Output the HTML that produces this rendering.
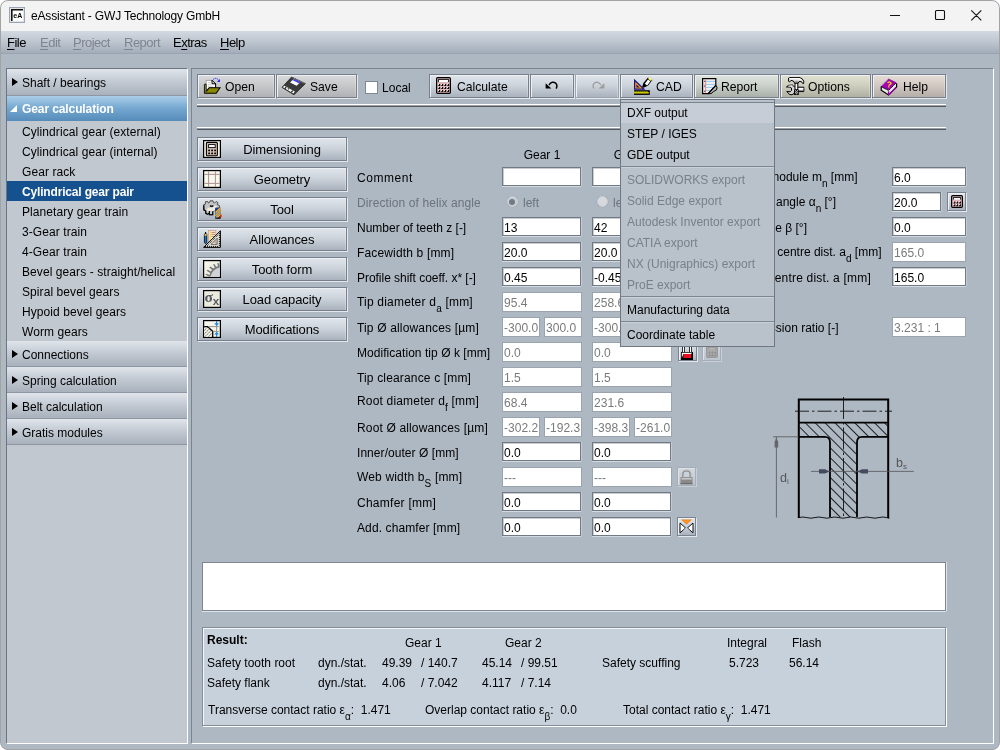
<!DOCTYPE html>
<html><head><meta charset="utf-8"><title>eAssistant - GWJ Technology GmbH</title>
<style>
*{box-sizing:border-box;margin:0;padding:0}
html,body{width:1000px;height:750px;overflow:hidden;background:#fff}
body{font-family:"Liberation Sans","DejaVu Sans",sans-serif;font-size:12px;color:#000;position:relative}
#win div,#win span,#win i,#win svg{position:absolute}
#win{position:absolute;left:0;top:0;width:1000px;height:750px;background:#aeb8c3;border-radius:8px;overflow:hidden;will-change:transform}
#frame{left:0;top:0;width:1000px;height:750px;border:1px solid #a3a3a3;border-radius:8px;z-index:50;pointer-events:none}
#title{left:0;top:0;width:1000px;height:31px;background:#f3f3f3}
#title .t{left:31px;top:9px;font-size:12px;white-space:nowrap;letter-spacing:-.17px}
#menubar{left:0;top:31px;width:1000px;height:23px;background:linear-gradient(#d3d9e1,#bfc7d1 45%,#a3adb9);border-bottom:1px solid #9aa4b0}
#menubar span{top:4px;font-size:13px;white-space:nowrap;letter-spacing:-.5px}
#menubar .d{color:#7d858f}
u{text-decoration:underline;text-underline-offset:2px;text-decoration-thickness:1px}
#side{left:6px;top:68px;width:182px;height:676px;background:#c1c8d0;border:1px solid;border-color:#6d7680 #fff #fff #6d7680}
.hdr{left:0;width:180px;height:26px;background:linear-gradient(#e0e5eb,#c4cbd4 45%,#a8b1bc);border-bottom:1px solid #8d97a3;line-height:29px;white-space:nowrap}
.hdr.sel{background:linear-gradient(#abcde8,#74a7d0 50%,#568cba);color:#fff;font-weight:bold;border-bottom:0;height:25px;line-height:26px;letter-spacing:-.1px}
.hdr i{left:5px;top:9px;width:0;height:0;border:4.5px solid transparent;border-left:6px solid #000;border-right:0}
.hdr i.open{left:3px;top:9px;border:0;border-bottom:7px solid #fff;border-left:7px solid transparent}
.hdr span{left:15px;top:0;font-weight:inherit}
.it{left:0;width:180px;height:20px;line-height:22px;white-space:nowrap;padding-left:15px;letter-spacing:.08px}
.it.sel{background:#15518f;color:#fff;font-weight:bold;letter-spacing:-.17px}
#main{left:191px;top:68px;width:803px;height:676px;border:1px solid;border-color:#7b8590 #fff #fff #7b8590}
.btn{border:1px solid #767f8a;background:linear-gradient(#e0e5eb,#cdd4dc 45%,#a9b2bd);box-shadow:inset 1px 1px 0 #edf0f4,inset -1px 0 0 rgba(255,255,255,.25),1px 1px 0 #e4e8ed;white-space:nowrap;font-size:13px}
.btn.n{background:linear-gradient(#d9dadc,#c8c9cb 45%,#b0b1b4)}
.btn.g{background:linear-gradient(#dfe4df,#ccd2cc 45%,#a9b0a8)}
.btn.y{background:linear-gradient(#e2e2d4,#d0d0c0 45%,#b0b0a2)}
.btn.p{background:linear-gradient(#e5ded7,#d2cac3 45%,#b4ada7)}
.btn.dis{border-color:#9ba5b0;color:#858d97}
.btn span{white-space:nowrap}
.tb span{transform:scaleX(.935);transform-origin:0 50%}
.sep{left:197px;width:749px;height:3px;background:linear-gradient(#fff 0,#fff 33%,#9a9fa6 34%,#9a9fa6 66%,#55595f 67%)}
.lbl{white-space:nowrap;font-size:12px;line-height:14px}
.lbl.d{color:#6b737c}
.lbl sub{font-size:10px;position:relative;top:6px;vertical-align:baseline;line-height:0}
.inp{height:19px;background:#fff;border:1px solid #707984;box-shadow:inset 1px 1px 0 rgba(100,110,122,.35),0 1px 0 #d4dae1,1px 0 0 #c3cad3;font-size:13px;line-height:18px;white-space:nowrap;overflow:hidden}
.inp span{left:1px;top:1px;transform:scaleX(.925);transform-origin:0 50%}
.inp.d{height:20px;box-shadow:none;border-color:#9aa4af;color:#7a7a7a}
.inp.d span{top:1px}
.sb{width:19px;height:19px;border:1px solid #7a838e;background:linear-gradient(#e3e8ee,#cdd4dc 45%,#a9b2bd);box-shadow:inset 1px 1px 0 #eef1f5,1px 1px 0 #e4e8ed}
.sb.dis{border-color:#a4adb8;background:linear-gradient(#d3d9e1,#bcc4ce);box-shadow:inset 1px 1px 0 #dde2e8,1px 1px 0 #c8cfd7}
#pop{left:620px;top:99px;width:155px;height:248px;background:#b9c1cb;border:1px solid #6f7882;z-index:20;font-size:12px}
#pop .tl{left:0;top:2px;width:153px;height:1px;background:#7a838d}
#pop .mi{left:0;width:153px;height:21px;line-height:23px;padding-left:6px;white-space:nowrap}
#pop .mi.d{color:#78808a}
#pop .mi.h{background:#c6cdd6}
#pop .ms{left:0;width:153px;height:2px;border-top:1px solid #7c8590;border-bottom:1px solid #c9d0d8}
#res{left:202px;top:627px;width:744px;height:99px;background:#c7d1dc;border:1px solid #858f9a;box-shadow:1px 1px 0 #fff,inset 1px 1px 0 #f4f6f8}
#res span{white-space:nowrap;font-size:12px;line-height:14px}
#ta{left:202px;top:562px;width:744px;height:49px;background:#fff;border:1px solid #7d8792;box-shadow:0 1px 0 #dfe4ea,1px 0 0 #dfe4ea}
</style></head><body>
<div id="win">
<div id="title"><svg style="left:9px;top:7px" width="16" height="16" viewBox="0 0 16 16" ><rect x=".5" y=".5" width="15" height="15" fill="#dfe3e8" stroke="#9aa5b1"/><rect x="2" y="2" width="12" height="12" fill="#fff"/><path d="M2.8 14V2.8H14" fill="none" stroke="#111" stroke-width="1.6"/><text x="8.8" y="11" font-size="7" font-weight="bold" font-family="Liberation Sans,sans-serif" text-anchor="middle">eA</text></svg><span class="t">eAssistant - GWJ Technology GmbH</span><svg style="left:885px;top:0px" width="110" height="31" viewBox="0 0 110 31" ><path d="M5 15.5h10M51.5 10.5h7a1 1 0 0 1 1 1v7a1 1 0 0 1 -1 1h-7a1 1 0 0 1 -1 -1v-7a1 1 0 0 1 1 -1zM86.3 10.3l10 10M96.3 10.3l-10 10" fill="none" stroke="#111" stroke-width="1.1"/></svg></div>
<div id="menubar"><span style="left:7px"><u>F</u>ile</span><span class="d" style="left:40px"><u>E</u>dit</span><span class="d" style="left:73px"><u>P</u>roject</span><span class="d" style="left:124px"><u>R</u>eport</span><span style="left:173px">E<u>x</u>tras</span><span style="left:220px"><u>H</u>elp</span></div>
<div id="side">
<div class="hdr" style="top:0px;height:27px"><i></i><span>Shaft / bearings</span></div>
<div class="hdr sel" style="top:27px"><i class=open></i><span>Gear calculation</span></div>
<div class="it" style="top:52px">Cylindrical gear (external)</div>
<div class="it" style="top:72px">Cylindrical gear (internal)</div>
<div class="it" style="top:92px">Gear rack</div>
<div class="it sel" style="top:112px">Cylindrical gear pair</div>
<div class="it" style="top:132px">Planetary gear train</div>
<div class="it" style="top:152px">3-Gear train</div>
<div class="it" style="top:172px">4-Gear train</div>
<div class="it" style="top:192px">Bevel gears - straight/helical</div>
<div class="it" style="top:212px">Spiral bevel gears</div>
<div class="it" style="top:232px">Hypoid bevel gears</div>
<div class="it" style="top:252px">Worm gears</div>
<div class="hdr" style="top:272px"><i></i><span>Connections</span></div>
<div class="hdr" style="top:298px"><i></i><span>Spring calculation</span></div>
<div class="hdr" style="top:324px"><i></i><span>Belt calculation</span></div>
<div class="hdr" style="top:350px"><i></i><span>Gratis modules</span></div>
</div>
<div id="main"></div>
<div class="btn tb n" style="left:197px;top:74px;width:78px;height:24px"><svg style="left:5px;top:2px" width="18" height="18" viewBox="0 0 18 18" ><g transform="translate(1,1)"><path d="M2.2 2.4H8.2L11.6 5.8V9.6H5L2.4 13Z" fill="#fff" stroke="#777" stroke-width=".6"/><path d="M8 2.2V5.8H11.6M11.6 5.8V9.6" fill="none" stroke="#000" stroke-width="1"/><path d="M8 2.2L11.8 6" stroke="#000" stroke-width="1"/><path d="M4 4.6h3.4M4 6.4h3.6M4 8.2h5" stroke="#bbb" stroke-width=".7"/><path d="M.4 6.4L2 6V13.6L.4 15Z" fill="#d6cf58" stroke="#000" stroke-width=".9"/><path d="M5.2 9.8H15.8L12 15.2H.6L2.2 13.6Z" fill="#8a8a00"/><path d="M.3 15.3H12.2L16 9.7H5.2L2.3 13.4" fill="none" stroke="#000" stroke-width="1.1"/><path d="M9 1.6Q11.6 -.9 14.2 1.6" fill="none" stroke="#2a2aff" stroke-width="1" stroke-dasharray="1.4 .8"/><path d="M13 3.8L15.9 1V3.9Z" fill="#1a1aff"/></g></svg><span style="left:27px;top:4px">Open</span></div>
<div class="btn tb n" style="left:276px;top:74px;width:81px;height:24px"><svg style="left:4px;top:1px" width="26" height="20" viewBox="0 0 26 20" ><path d="M10.6 1L24.4 7.6L13 18.8L1 11.4Z" fill="#3a3a3a" stroke="#222" stroke-width=".8"/><path d="M11.4 1.6L23.6 7.4" stroke="#8a8a8a" stroke-width=".8"/><path d="M9 6.6L12.6 3.2L19 6.4L15.6 9.8Z" fill="#fff"/><path d="M12.6 3L19.2 6.2L18.2 7.4L11.8 4.2Z" fill="#3d3dff"/><path d="M1.8 11.3L3.6 9.8L13.8 15.6L12.4 17.6Z" fill="#f4f4f4"/><path d="M3.8 12.8l1.4-2M10.4 16.4l1.3-1.9" stroke="#222" stroke-width="1.2"/><path d="M6.8 12.4l1.4 .8" stroke="#333" stroke-width="1.1"/></svg><span style="left:33px;top:4px">Save</span></div>
<div style="left:365px;top:81px;width:13px;height:13px;background:#fff;border:1px solid #7f8893"></div><span class="lbl" style="left:382px;top:81px;font-size:13px;transform:scaleX(.925);transform-origin:0 50%">Local</span>
<div class="btn tb " style="left:429px;top:74px;width:100px;height:24px"><svg style="left:6px;top:2px" width="15" height="17" viewBox="0 0 15 17" ><rect x=".6" y=".6" width="13.8" height="15.8" rx="1.2" fill="#dbb2b6" stroke="#000" stroke-width="1.2"/><rect x="2.4" y="2.4" width="10.2" height="2.6" fill="#fff"/><path d="M2.4 5.0V2.4H12.6V5.0" fill="none" stroke="#000" stroke-width=".9"/><rect x="2.80" y="7.10" width="1.4" height="1.8" rx=".5" fill="#000"/><rect x="2.30" y="8.10" width="1.4" height=".9" rx=".3" fill="#000"/><rect x="2.00" y="6.80" width="1" height="1" fill="#fff" opacity=".9"/><rect x="5.80" y="7.10" width="1.4" height="1.8" rx=".5" fill="#000"/><rect x="5.30" y="8.10" width="1.4" height=".9" rx=".3" fill="#000"/><rect x="5.00" y="6.80" width="1" height="1" fill="#fff" opacity=".9"/><rect x="8.80" y="7.10" width="1.4" height="1.8" rx=".5" fill="#000"/><rect x="8.30" y="8.10" width="1.4" height=".9" rx=".3" fill="#000"/><rect x="8.00" y="6.80" width="1" height="1" fill="#fff" opacity=".9"/><rect x="11.80" y="7.10" width="1.4" height="1.8" rx=".5" fill="#000"/><rect x="11.30" y="8.10" width="1.4" height=".9" rx=".3" fill="#000"/><rect x="11.00" y="6.80" width="1" height="1" fill="#fff" opacity=".9"/><rect x="2.80" y="10.10" width="1.4" height="1.8" rx=".5" fill="#000"/><rect x="2.30" y="11.10" width="1.4" height=".9" rx=".3" fill="#000"/><rect x="2.00" y="9.80" width="1" height="1" fill="#fff" opacity=".9"/><rect x="5.80" y="10.10" width="1.4" height="1.8" rx=".5" fill="#000"/><rect x="5.30" y="11.10" width="1.4" height=".9" rx=".3" fill="#000"/><rect x="5.00" y="9.80" width="1" height="1" fill="#fff" opacity=".9"/><rect x="8.80" y="10.10" width="1.4" height="1.8" rx=".5" fill="#000"/><rect x="8.30" y="11.10" width="1.4" height=".9" rx=".3" fill="#000"/><rect x="8.00" y="9.80" width="1" height="1" fill="#fff" opacity=".9"/><rect x="11.80" y="10.10" width="1.4" height="1.8" rx=".5" fill="#000"/><rect x="11.30" y="11.10" width="1.4" height=".9" rx=".3" fill="#000"/><rect x="11.00" y="9.80" width="1" height="1" fill="#fff" opacity=".9"/><rect x="2.80" y="13.10" width="1.4" height="1.8" rx=".5" fill="#000"/><rect x="2.30" y="14.10" width="1.4" height=".9" rx=".3" fill="#000"/><rect x="2.00" y="12.80" width="1" height="1" fill="#fff" opacity=".9"/><rect x="5.80" y="13.10" width="1.4" height="1.8" rx=".5" fill="#000"/><rect x="5.30" y="14.10" width="1.4" height=".9" rx=".3" fill="#000"/><rect x="5.00" y="12.80" width="1" height="1" fill="#fff" opacity=".9"/><rect x="8.80" y="13.10" width="1.4" height="1.8" rx=".5" fill="#000"/><rect x="8.30" y="14.10" width="1.4" height=".9" rx=".3" fill="#000"/><rect x="8.00" y="12.80" width="1" height="1" fill="#fff" opacity=".9"/><rect x="11.80" y="13.10" width="1.4" height="1.8" rx=".5" fill="#000"/><rect x="11.30" y="14.10" width="1.4" height=".9" rx=".3" fill="#000"/><rect x="11.00" y="12.80" width="1" height="1" fill="#fff" opacity=".9"/></svg><span style="left:27px;top:4px">Calculate</span></div>
<div class="btn tb " style="left:530px;top:74px;width:44px;height:24px"><svg style="left:14px;top:6px" width="14" height="10" viewBox="0 0 14 10" ><path d="M4 4Q7 -.6 11 2.4Q12.8 4.2 11.2 7.6" fill="none" stroke="#000" stroke-width="1.4"/><path d="M.6 2.2V7.6H6.4Z" fill="#000"/></svg></div>
<div class="btn tb dis" style="left:575px;top:74px;width:44px;height:24px"><svg style="left:15px;top:6px" width="14" height="10" viewBox="0 0 14 10" ><g transform="translate(14,0) scale(-1,1)"><path d="M4 4Q7 -.6 11 2.4Q12.8 4.2 11.2 7.6" fill="none" stroke="#9c9c9c" stroke-width="1.2"/><path d="M.6 2.2V7.6H6.4Z" fill="#9c9c9c"/></g></svg></div>
<div class="btn tb " style="left:620px;top:74px;width:73px;height:24px"><svg style="left:12px;top:2px" width="20" height="19" viewBox="0 0 20 19" ><path d="M1 1.8L1 12.8H12.4Z" fill="#14148c"/><path d="M2.2 4.8L2.2 11.6H9.4Z" fill="#ff9c0a"/><path d="M3.4 7.4L3.4 10.4H6.8Z" fill="#14148c"/><rect x="1" y="13.2" width="15.8" height="4.7" fill="#000"/><rect x="1" y="15.2" width="14.8" height="1.3" fill="#f4f000"/><path d="M1.4 14.7h14" stroke="#f4f000" stroke-width="1" stroke-dasharray="1.1 .9"/><path d="M9.2 9.8L10.4 6L15 .4L19.4 3L15.2 8.6L10.6 10.8Z" fill="#000"/><path d="M11.8 6.8L15 2.6L17.4 4.2L14.2 8.4Z" fill="#fff"/><path d="M15 1.8L16.2 .6L19 2.6L17.8 4Z" fill="#f2ee00"/><path d="M15.8 1L18.4 3" stroke="#fff" stroke-width="1"/></svg><span style="left:35px;top:4px">CAD</span></div>
<div class="btn tb g" style="left:694px;top:74px;width:85px;height:24px"><svg style="left:7px;top:3px" width="18" height="17" viewBox="0 0 18 17" ><path d="M.6 .6H13.8V7.6L6.4 15.6H.6Z" fill="#f2efef" stroke="#000" stroke-width="1.2"/><path d="M3.6 3.4H13M3.6 6.4H13M3.6 9.4H11.4M3.6 12.4H8.6" stroke="#8ccaf2" stroke-width="1"/><path d="M1.6 3.4H2.6M1.6 6.4H2.6M1.6 9.4H2.6M1.6 12.4H2.6" stroke="#8ccaf2" stroke-width="1"/><path d="M3.6 1.2V15.2" stroke="#f58080" stroke-width="1"/><path d="M2.6 2.8v.9M2.6 7.6v.9M2.6 12.8v.9" stroke="#000" stroke-width=".9"/><path d="M13.8 7.4L15 9.2L14.6 11.8L11.8 13.4L9 15.6L6.2 15.7Z" fill="#b4b4b4" stroke="#000" stroke-width="1"/><path d="M13.8 7.4L6.2 15.6" stroke="#000" stroke-width="1.3"/></svg><span style="left:26px;top:4px">Report</span></div>
<div class="btn tb y" style="left:780px;top:74px;width:91px;height:24px"><svg style="left:5px;top:2px" width="19" height="19" viewBox="0 0 19 19" ><path d="M.4 10L2.4 8.4L6.4 8L7.8 9.2L8.8 10.2H17.8V14.6H8.8L8 16.4L6 17.8L3.4 17.4L.8 14.4L4.2 14.8L5.6 13.4L5.4 11L4 10Z" fill="#d4d4d4" stroke="#000" stroke-width="1"/><path d="M2.6 9.2L6.2 8.8" stroke="#fff" stroke-width="1"/><path d="M12 10.9H17.4V12.4H12Z" fill="#fff"/><path d="M12 13.2H17.4V14H12Z" fill="#777"/><path d="M2.6 1L3.4 .4H13L16 1.6L17.8 4.2L17.6 6.6L16.6 6.4L15.4 4.6L13 4.6L12 6.4H8.8L7.4 4L5 3.4L3.6 5L2.6 4.4Z" fill="#dedede" stroke="#000" stroke-width="1"/><path d="M3.6 1.6H12.8L15.4 2.8" stroke="#fff" stroke-width="1.3" fill="none"/><path d="M8.4 4.4L10.4 3.4L12.6 4.2L11.8 6H9.2Z" fill="#a4a4a4"/><rect x="9" y="6.2" width="2.8" height="6.6" fill="#fafafa" stroke="#000" stroke-width="1"/><rect x="8" y="12.6" width="4.8" height="5.4" fill="#0a0a0a"/><path d="M9 13.8h1M11 13.8h1M10 14.8h1M9 15.8h1M11 15.8h1M10 16.8h1" stroke="#e8e8e8" stroke-width="1"/></svg><span style="left:27px;top:4px">Options</span></div>
<div class="btn tb p" style="left:872px;top:74px;width:74px;height:24px"><svg style="left:7px;top:3px" width="18" height="18" viewBox="0 0 18 18" ><path d="M1.2 8.4V12.2L8.6 17L16.6 9V5.2" fill="#e8e8e8" stroke="#000" stroke-width="1.2"/><path d="M8.6 13.2V17" stroke="#a000b0" stroke-width="1.4"/><path d="M9 16.6L16.4 9.2" stroke="#a000b0" stroke-width="1.2"/><path d="M8.6 1L16 4.6L8.6 12L1.2 8.4Z" fill="#a400b4" stroke="#7a0088" stroke-width=".6"/><path d="M7.6 1.8L1.8 7.6" stroke="#d8a8e0" stroke-width="1" stroke-dasharray="1 1"/><path d="M1.2 8.8L8.6 12.4L16 5" fill="none" stroke="#000" stroke-width="1" stroke-dasharray="1.6 .6"/><text x="9.2" y="9.4" font-size="8.5" font-weight="bold" fill="#ffee00" font-family="Liberation Sans,sans-serif" text-anchor="middle" transform="rotate(8 9 7)">?</text></svg><span style="left:30px;top:4px">Help</span></div>
<div class="sep" style="top:104px"></div><div class="sep" style="top:127px"></div>
<div class="btn" style="left:197px;top:137px;width:150px;height:24px"><svg style="left:5px;top:2px" width="18" height="18" viewBox="0 0 18 18" ><rect x=".6" y=".6" width="16.8" height="16.8" fill="#f6f4ea" stroke="#000" stroke-width="1.2"/><rect x="3.4" y="2.4" width="11" height="13.4" rx="1" fill="#d2beb0" stroke="#000" stroke-width="1.1"/><rect x="5.6" y="4.6" width="6.6" height="3" fill="#fff" stroke="#000" stroke-width=".9"/><rect x="5.2" y="9.4" width="1.8" height="1.8" rx=".5" fill="#000"/><rect x="8.2" y="9.4" width="1.8" height="1.8" rx=".5" fill="#000"/><rect x="11.2" y="9.4" width="1.8" height="1.8" rx=".5" fill="#000"/><rect x="5.2" y="12.4" width="1.8" height="1.8" rx=".5" fill="#000"/><rect x="8.2" y="12.4" width="1.8" height="1.8" rx=".5" fill="#000"/><rect x="11.2" y="12.4" width="1.8" height="1.8" rx=".5" fill="#000"/></svg><span style="left:20px;width:128px;text-align:center;top:4px;letter-spacing:-.1px">Dimensioning</span></div>
<div class="btn" style="left:197px;top:167px;width:150px;height:24px"><svg style="left:5px;top:2px" width="18" height="18" viewBox="0 0 18 18" ><rect x=".6" y=".6" width="16.8" height="16.8" fill="#f7f7ea" stroke="#000" stroke-width="1.2"/><path d="M5.6 1.2V16.8M12.4 1.2V16.8M1.2 4.4H16.8M1.2 13.4H16.8" stroke="#ab8e96" stroke-width="1"/></svg><span style="left:20px;width:128px;text-align:center;top:4px;letter-spacing:-.1px">Geometry</span></div>
<div class="btn" style="left:197px;top:197px;width:150px;height:24px"><svg style="left:5px;top:2px" width="19" height="19" viewBox="0 0 19 19" ><path d="M2.4 1.6H4.8L5.4 3L6.6 2.4L7 .8H10L10.4 2.4L11.6 3L13.2 1.4L15 2.8L14.2 4.6L16.4 5.4V8L13 10.4L9.6 11.4V14.8H6.4V13.4L4.6 14.4L2.6 13.6V11L1 10.2L.6 4.8L2.4 4.2Z" fill="#c4c4c4" stroke="#333" stroke-width=".8"/><path d="M3.6 9.2L6 7.4L9 8L11.6 5.4L14.6 6.4L13 10L9.8 11.2L6.8 10.8L4.8 11.4Z" fill="#f0ebdc"/><path d="M.8 5.2V9.8L2.8 11V13.4L4.6 14.2L6.4 13.2" fill="none" stroke="#000" stroke-width="1.2"/><path d="M6.4 11V14.8H9.8V11.6" fill="none" stroke="#000" stroke-width="1.1"/><rect x="7.4" y="12" width="1.6" height="1.8" fill="#a8dce6"/><ellipse cx="8.6" cy="6" rx="2" ry="1" fill="#111"/><ellipse cx="8.6" cy="5.6" rx="1" ry=".4" fill="#999"/><rect x="12" y="7.6" width="6" height="10.8" rx="1.4" fill="#1a3c9c"/><path d="M12.4 12.4L17.6 7.8M12.2 16L18 10.6M13.6 18L18 14" stroke="#f2b000" stroke-width="1.3"/><path d="M12.2 14.2L18 8.8M12.6 17.6L18 12.4" stroke="#e8e8e8" stroke-width=".8"/><path d="M16.4 18L18 16.4V14.6" stroke="#e02000" stroke-width="1.2" fill="none"/><path d="M12.2 18.2H17.6" stroke="#000" stroke-width="1"/></svg><span style="left:20px;width:128px;text-align:center;top:4px;letter-spacing:-.1px">Tool</span></div>
<div class="btn" style="left:197px;top:227px;width:150px;height:24px"><svg style="left:5px;top:2px" width="18" height="18" viewBox="0 0 18 18" ><rect x="5.4" y=".4" width="7.4" height="14.4" fill="#f6eed8" stroke="#d09898" stroke-width=".8"/><path d="M7.2 1V14.4" stroke="#f4d030" stroke-width="1"/><path d="M8.4 2.4h3.6M8.4 4.4h3.6M8.4 6.4h3.6M9 10h3.4M9 12h3.4" stroke="#b86840" stroke-width=".8"/><path d="M1.4 4H3.8V12.4L2.6 13.8L1.4 12.4Z" fill="#1878d0" stroke="#000" stroke-width=".8"/><rect x="1.6" y="4" width="2" height="1.8" fill="#f2c840"/><path d="M2.6 2V4" stroke="#000" stroke-width="1.1"/><path d="M.6 17.4H17.4V.8ZM8 14.4L14.2 8.2V14.4Z" fill="#dcdcd4" fill-rule="evenodd"/><path d="M.6 17.4H17.4V.8Z" fill="none" stroke="#000" stroke-width="1"/><path d="M8 14.4L14.2 8.2V14.4Z" fill="none" stroke="#444" stroke-width=".7"/><path d="M4 16L16 4" stroke="#000" stroke-width=".9" stroke-dasharray="1 1.1"/><path d="M2.6 17.2v-1.3M4.6 17.2v-1.3M6.6 17.2v-1.3M8.6 17.2v-1.3M10.6 17.2v-1.3M12.6 17.2v-1.3M14.6 17.2v-1.3M17.2 3.4h-1.3M17.2 5.4h-1.3M17.2 7.4h-1.3M17.2 9.4h-1.3M17.2 11.4h-1.3M17.2 13.4h-1.3M17.2 15.4h-1.3" stroke="#000" stroke-width=".9"/></svg><span style="left:20px;width:128px;text-align:center;top:4px;letter-spacing:-.1px">Allowances</span></div>
<div class="btn" style="left:197px;top:257px;width:150px;height:24px"><svg style="left:5px;top:2px" width="18" height="18" viewBox="0 0 18 18" ><defs><linearGradient id="tg" x1="0" y1="0" x2="1" y2="1"><stop offset="0" stop-color="#f8f8ec"/><stop offset="1" stop-color="#e4e4dc"/></linearGradient></defs><rect x=".6" y=".6" width="16.8" height="16.8" fill="url(#tg)" stroke="#000" stroke-width="1.2"/><path d="M6.8 16.8Q8.6 9 16.8 6.6V16.8Z" fill="#d0d2d6"/><path d="M2.2 14.6L3.6 13.8L6.6 15L7.2 13L3.6 10.8L4.8 9.8L7.8 11.6L9 10L6.2 7.2L7.6 6.4L10.2 8.6L11.8 7.6L10 4.4L11.4 4L13.2 6.8L15 6.2L14.2 3.2L15.6 3L16.6 5.6V7.4Q9 9.4 7.4 16.6L6 16.4Z" fill="#787878"/></svg><span style="left:20px;width:128px;text-align:center;top:4px;letter-spacing:-.1px">Tooth form</span></div>
<div class="btn" style="left:197px;top:287px;width:150px;height:24px"><svg style="left:5px;top:2px" width="18" height="18" viewBox="0 0 18 18" ><rect x=".6" y=".6" width="16.8" height="16.8" fill="#eaeade" stroke="#000" stroke-width="1.2"/><text x="1.6" y="11.6" font-size="15.5" font-weight="bold" fill="#5a5a64" font-family="Liberation Serif,serif">σ</text><text x="9.8" y="14.8" font-size="11.5" font-weight="bold" fill="#5a5a64" font-family="Liberation Sans,sans-serif">x</text></svg><span style="left:20px;width:128px;text-align:center;top:4px;letter-spacing:-.1px">Load capacity</span></div>
<div class="btn" style="left:197px;top:317px;width:150px;height:24px"><svg style="left:5px;top:2px" width="18" height="18" viewBox="0 0 18 18" ><defs><pattern id="hp" width="2.4" height="2.4" patternUnits="userSpaceOnUse" patternTransform="rotate(-45)"><rect width="2.4" height="2.4" fill="#f2f2e6"/><path d="M0 1.2H2.4" stroke="#666" stroke-width=".8" stroke-dasharray=".8 .5"/></pattern></defs><rect x=".6" y=".6" width="16.8" height="16.8" fill="#f6f6ea" stroke="#000" stroke-width="1.2"/><path d="M1.2 6.8H4.6L9.6 11.4V16.8H2.4Q1.2 16.8 1.2 15Z" fill="url(#hp)"/><path d="M1.2 6.6H4.6L9.7 11.4V17" fill="none" stroke="#000" stroke-width="1.3"/><path d="M5 6.6H15.8M9.8 11.4H15.8M13.6 6.6V11.4" stroke="#888" stroke-width=".9"/><path d="M13.6 1V5.8M13.6 12.4V17" stroke="#1e88e0" stroke-width="1.2"/><path d="M11.2 3.2H16L13.6 6Z" fill="#1e88e0"/><path d="M11.2 14.6H16L13.6 11.8Z" fill="#1e88e0"/></svg><span style="left:20px;width:128px;text-align:center;top:4px;letter-spacing:-.1px">Modifications</span></div>
<span class="lbl" style="left:357px;top:171px;letter-spacing:0.555px">Comment</span>
<span class="lbl d" style="left:357px;top:196px;letter-spacing:0.104px">Direction of helix angle</span>
<span class="lbl" style="left:357px;top:221px;letter-spacing:-0.009px">Number of teeth z [-]</span>
<span class="lbl" style="left:357px;top:246px;letter-spacing:0.156px">Facewidth b [mm]</span>
<span class="lbl" style="left:357px;top:271px;letter-spacing:-0.034px">Profile shift coeff. x* [-]</span>
<span class="lbl" style="left:357px;top:295px;letter-spacing:0.204px">Tip diameter d<sub>a</sub> [mm]</span>
<span class="lbl" style="left:357px;top:321px;letter-spacing:0.161px">Tip Ø allowances [µm]</span>
<span class="lbl" style="left:357px;top:346px;letter-spacing:0.046px">Modification tip Ø k [mm]</span>
<span class="lbl" style="left:357px;top:371px;letter-spacing:0.159px">Tip clearance c [mm]</span>
<span class="lbl" style="left:357px;top:394px;letter-spacing:0.178px">Root diameter d<sub>f</sub> [mm]</span>
<span class="lbl" style="left:357px;top:421px;letter-spacing:0.148px">Root Ø allowances [µm]</span>
<span class="lbl" style="left:357px;top:446px;letter-spacing:0.055px">Inner/outer Ø [mm]</span>
<span class="lbl" style="left:357px;top:470px;letter-spacing:0.16px">Web width b<sub>S</sub> [mm]</span>
<span class="lbl" style="left:357px;top:496px;letter-spacing:0.265px">Chamfer [mm]</span>
<span class="lbl" style="left:357px;top:521px;letter-spacing:0.107px">Add. chamfer [mm]</span>
<span class="lbl" style="left:502px;width:80px;text-align:center;top:148px">Gear 1</span><span class="lbl" style="left:592px;width:80px;text-align:center;top:148px">Gear 2</span>
<div class="inp" style="left:502px;top:167px;width:79px"></div>
<div class="inp" style="left:592px;top:167px;width:79px"></div>
<div class="inp" style="left:502px;top:217px;width:79px"><span>13</span></div>
<div class="inp" style="left:592px;top:217px;width:79px"><span>42</span></div>
<div class="inp" style="left:502px;top:242px;width:79px"><span>20.0</span></div>
<div class="inp" style="left:592px;top:242px;width:79px"><span>20.0</span></div>
<div class="inp" style="left:502px;top:267px;width:79px"><span>0.45</span></div>
<div class="inp" style="left:592px;top:267px;width:79px"><span>-0.45</span></div>
<div class="inp d" style="left:502px;top:292px;width:80px"><span>95.4</span></div>
<div class="inp d" style="left:592px;top:292px;width:80px"><span>258.6</span></div>
<div class="inp d" style="left:502px;top:342px;width:80px"><span>0.0</span></div>
<div class="inp d" style="left:592px;top:342px;width:80px"><span>0.0</span></div>
<div class="inp d" style="left:502px;top:367px;width:80px"><span>1.5</span></div>
<div class="inp d" style="left:592px;top:367px;width:80px"><span>1.5</span></div>
<div class="inp d" style="left:502px;top:392px;width:80px"><span>68.4</span></div>
<div class="inp d" style="left:592px;top:392px;width:80px"><span>231.6</span></div>
<div class="inp" style="left:502px;top:442px;width:79px"><span>0.0</span></div>
<div class="inp" style="left:592px;top:442px;width:79px"><span>0.0</span></div>
<div class="inp d" style="left:502px;top:467px;width:80px"><span>---</span></div>
<div class="inp d" style="left:592px;top:467px;width:80px"><span>---</span></div>
<div class="inp" style="left:502px;top:492px;width:79px"><span>0.0</span></div>
<div class="inp" style="left:592px;top:492px;width:79px"><span>0.0</span></div>
<div class="inp" style="left:502px;top:517px;width:79px"><span>0.0</span></div>
<div class="inp" style="left:592px;top:517px;width:79px"><span>0.0</span></div>
<div class="inp d" style="left:502px;top:317px;width:38px"><span>-300.0</span></div>
<div class="inp d" style="left:544px;top:317px;width:38px"><span>300.0</span></div>
<div class="inp d" style="left:592px;top:317px;width:38px"><span>-300.0</span></div>
<div class="inp d" style="left:634px;top:317px;width:38px"><span>300.0</span></div>
<div class="inp d" style="left:502px;top:417px;width:38px"><span>-302.2</span></div>
<div class="inp d" style="left:544px;top:417px;width:38px"><span>-192.3</span></div>
<div class="inp d" style="left:592px;top:417px;width:38px"><span>-398.3</span></div>
<div class="inp d" style="left:634px;top:417px;width:38px"><span>-261.0</span></div>
<div style="left:506.5px;top:196px;width:11px;height:11px;border-radius:50%;background:#c9ced5;border:1px solid #c9cfd7;box-shadow:0 0 0 .5px rgba(150,160,172,.6)"></div><div style="left:509px;top:198.5px;width:6px;height:6px;border-radius:50%;background:#747a82"></div><span class="lbl d" style="left:523px;top:196px">left</span>
<div style="left:596.5px;top:196px;width:11px;height:11px;border-radius:50%;background:#d6d8db;border:1px solid #c9cfd7;box-shadow:0 0 0 .5px rgba(150,160,172,.6)"></div><span class="lbl d" style="left:613px;top:196px">left</span>
<div class="sb" style="left:678px;top:342px"><svg style="left:0px;top:0px" width="16" height="18" viewBox="0 0 16 18" ><rect x="3.4" y="0" width="2.2" height="9.4" fill="#fff" stroke="#000" stroke-width=".8"/><rect x="10.4" y="0" width="2.2" height="9.4" fill="#fff" stroke="#000" stroke-width=".8"/><rect x="2" y="9" width="12" height="8" fill="#000"/><path d="M2.8 15V9.8H13.2L12 11H4.4Z" fill="#fff"/><rect x="4.4" y="11" width="7.8" height="4" fill="#e81020"/></svg></div>
<div class="sb dis" style="left:702px;top:342px"><svg style="left:3px;top:2px" width="12" height="13" viewBox="0 0 12 13" ><rect x=".6" y=".6" width="10.8" height="11.8" rx="1.2" fill="#a9a9a9" stroke="#9a9a9a" stroke-width="1.2"/><rect x="2.4" y="2.4" width="7.2" height="2.2" fill="#b4b4b4"/><path d="M2.4 4.6V2.4H9.6V4.6" fill="none" stroke="#9a9a9a" stroke-width=".9"/><rect x="3.00" y="6.50" width="1.4" height="1.8" rx=".5" fill="#8c8c8c"/><rect x="2.50" y="7.50" width="1.4" height=".9" rx=".3" fill="#8c8c8c"/><rect x="2.20" y="6.20" width="1" height="1" fill="#b0b0b0" opacity=".9"/><rect x="5.80" y="6.50" width="1.4" height="1.8" rx=".5" fill="#8c8c8c"/><rect x="5.30" y="7.50" width="1.4" height=".9" rx=".3" fill="#8c8c8c"/><rect x="5.00" y="6.20" width="1" height="1" fill="#b0b0b0" opacity=".9"/><rect x="8.60" y="6.50" width="1.4" height="1.8" rx=".5" fill="#8c8c8c"/><rect x="8.10" y="7.50" width="1.4" height=".9" rx=".3" fill="#8c8c8c"/><rect x="7.80" y="6.20" width="1" height="1" fill="#b0b0b0" opacity=".9"/><rect x="3.00" y="9.30" width="1.4" height="1.8" rx=".5" fill="#8c8c8c"/><rect x="2.50" y="10.30" width="1.4" height=".9" rx=".3" fill="#8c8c8c"/><rect x="2.20" y="9.00" width="1" height="1" fill="#b0b0b0" opacity=".9"/><rect x="5.80" y="9.30" width="1.4" height="1.8" rx=".5" fill="#8c8c8c"/><rect x="5.30" y="10.30" width="1.4" height=".9" rx=".3" fill="#8c8c8c"/><rect x="5.00" y="9.00" width="1" height="1" fill="#b0b0b0" opacity=".9"/><rect x="8.60" y="9.30" width="1.4" height="1.8" rx=".5" fill="#8c8c8c"/><rect x="8.10" y="10.30" width="1.4" height=".9" rx=".3" fill="#8c8c8c"/><rect x="7.80" y="9.00" width="1" height="1" fill="#b0b0b0" opacity=".9"/></svg></div>
<div class="sb dis" style="left:677px;top:467px"><svg style="left:2px;top:1px" width="13" height="16" viewBox="0 0 13 16" ><path d="M2.6 8.4V5Q2.6 1.4 6.5 1.4Q10.4 1.4 10.4 5V8.4" fill="none" stroke="#c4c4c4" stroke-width="2.4"/><path d="M2.9 8.4V5Q2.9 2 6.5 2Q10.1 2 10.1 5V8.4" fill="none" stroke="#8a8a8a" stroke-width="1.1"/><rect x=".5" y="8" width="12" height="7.2" fill="#8a8a8a"/><rect x="1.4" y="8.8" width="10.2" height="1.8" fill="#c6c6c6"/><rect x=".5" y="14" width="12" height="1.2" fill="#6c6c6c"/></svg></div>
<div class="sb" style="left:677px;top:517px"><svg style="left:1px;top:1px" width="15" height="15" viewBox="0 0 15 15" ><path d="M2.6 .8H12.4L7.5 5.2Z" fill="#ff9224" stroke="#e07810" stroke-width=".5"/><path d="M1 4V13.8L6.6 9ZM14 4V13.8L8.4 9Z" fill="#fff" stroke="#111" stroke-width="1"/><path d="M4.6 5L10.4 12M10.4 5L4.6 12" stroke="#b8cde0" stroke-width=".9"/></svg></div>
<div class="sb" style="left:947px;top:192px"><svg style="left:3px;top:2px" width="12" height="13" viewBox="0 0 12 13" ><rect x=".6" y=".6" width="10.8" height="11.8" rx="1.2" fill="#e0b4b8" stroke="#000" stroke-width="1.2"/><rect x="2.4" y="2.4" width="7.2" height="2.2" fill="#fff"/><path d="M2.4 4.6V2.4H9.6V4.6" fill="none" stroke="#000" stroke-width=".9"/><rect x="3.00" y="6.50" width="1.4" height="1.8" rx=".5" fill="#000"/><rect x="2.50" y="7.50" width="1.4" height=".9" rx=".3" fill="#000"/><rect x="2.20" y="6.20" width="1" height="1" fill="#fff" opacity=".9"/><rect x="5.80" y="6.50" width="1.4" height="1.8" rx=".5" fill="#000"/><rect x="5.30" y="7.50" width="1.4" height=".9" rx=".3" fill="#000"/><rect x="5.00" y="6.20" width="1" height="1" fill="#fff" opacity=".9"/><rect x="8.60" y="6.50" width="1.4" height="1.8" rx=".5" fill="#000"/><rect x="8.10" y="7.50" width="1.4" height=".9" rx=".3" fill="#000"/><rect x="7.80" y="6.20" width="1" height="1" fill="#fff" opacity=".9"/><rect x="3.00" y="9.30" width="1.4" height="1.8" rx=".5" fill="#000"/><rect x="2.50" y="10.30" width="1.4" height=".9" rx=".3" fill="#000"/><rect x="2.20" y="9.00" width="1" height="1" fill="#fff" opacity=".9"/><rect x="5.80" y="9.30" width="1.4" height="1.8" rx=".5" fill="#000"/><rect x="5.30" y="10.30" width="1.4" height=".9" rx=".3" fill="#000"/><rect x="5.00" y="9.00" width="1" height="1" fill="#fff" opacity=".9"/><rect x="8.60" y="9.30" width="1.4" height="1.8" rx=".5" fill="#000"/><rect x="8.10" y="10.30" width="1.4" height=".9" rx=".3" fill="#000"/><rect x="7.80" y="9.00" width="1" height="1" fill="#fff" opacity=".9"/></svg></div>
<span class="lbl" style="right:142.5px;top:170px">Normal module m<sub>n</sub> [mm]</span>
<span class="lbl" style="right:164px;top:195px">Pressure angle α<sub>n</sub> [°]</span>
<span class="lbl" style="right:193px;top:221px">Helix angle β [°]</span>
<span class="lbl" style="right:118.5px;top:245px">Reference centre dist. a<sub>d</sub> [mm]</span>
<span class="lbl" style="right:129px;top:271px;letter-spacing:.2px">Working centre dist. a [mm]</span>
<span class="lbl" style="right:161.5px;top:321px">Transmission ratio [-]</span>
<div class="inp" style="left:892px;top:167px;width:74px"><span>6.0</span></div>
<div class="inp" style="left:892px;top:192px;width:49px"><span>20.0</span></div>
<div class="inp" style="left:892px;top:217px;width:74px"><span>0.0</span></div>
<div class="inp d" style="left:892px;top:242px;width:74px"><span>165.0</span></div>
<div class="inp" style="left:892px;top:267px;width:74px"><span>165.0</span></div>
<div class="inp d" style="left:892px;top:317px;width:74px"><span>3.231 : 1</span></div>
<svg style="left:760px;top:385px" width="170" height="145" viewBox="0 0 170 145" ><defs><pattern id="dh" width="7" height="7" patternUnits="userSpaceOnUse" patternTransform="translate(2.5,0) rotate(45)"><path d="M0 3.5H7" stroke="#111" stroke-width=".9"/></pattern><clipPath id="dc"><path d="M39.6 38H127.6V51.8H102.2Q97 51.8 97 57V132H70V57Q70 51.8 64.8 51.8H39.6Z"/></clipPath></defs><rect x="30" y="30" width="110" height="110" fill="url(#dh)" clip-path="url(#dc)"/><path d="M38.8 133V14.6H128.2V133" fill="none" stroke="#000" stroke-width="2"/><path d="M38.8 37.6H128.2" stroke="#000" stroke-width="1.9"/><path d="M38.8 51.8H64.8Q70 51.8 70 57V132M128.2 51.8H102.2Q97 51.8 97 57V132" fill="none" stroke="#000" stroke-width="1.8"/><path d="M38.8 132.6q4-1.2 8 0t8 0t8 0t8 0t8 0t8 0t8 0t8 0t8 0t8 0t8 0t1.4 -.2" fill="none" stroke="#000" stroke-width=".9"/><path d="M35 26.2H132" stroke="#111" stroke-width=".9" stroke-dasharray="14 3 2.5 3"/><path d="M83.5 12V134" stroke="#111" stroke-width=".9" stroke-dasharray="22 3 2.5 3"/><path d="M13 51.8H38.8M16.4 51.8V132.6" stroke="#555" stroke-width=".8"/><path d="M16.4 52.4L18.2 57V62.4H14.6V57Z" fill="#666"/><path d="M51 86.4H153.8" stroke="#555" stroke-width=".8"/><path d="M59 84.2H65L69.6 86.4L65 88.6H59ZM108 84.2H102L97.4 86.4L102 88.6H108Z" fill="#454a60"/><text x="136" y="82" font-size="12.5" fill="#555" font-family="Liberation Sans,sans-serif">b<tspan font-size="8" dy="2">s</tspan></text><text x="20" y="97" font-size="12.5" fill="#555" font-family="Liberation Sans,sans-serif">d<tspan font-size="8" dy="1.5">i</tspan></text></svg>
<div id="ta"></div>
<div id="res">
<span style="left:4px;top:5px;font-weight:bold">Result:</span>
<span style="left:202px;top:8px;">Gear 1</span>
<span style="left:302px;top:8px;">Gear 2</span>
<span style="left:524px;top:8px;">Integral</span>
<span style="left:589px;top:8px;">Flash</span>
<span style="left:4px;top:28px;">Safety tooth root</span>
<span style="left:115px;top:28px;">dyn./stat.</span>
<span style="left:179px;top:28px;">49.39</span>
<span style="left:218px;top:28px;">/ 140.7</span>
<span style="left:279px;top:28px;">45.14</span>
<span style="left:318px;top:28px;">/ 99.51</span>
<span style="left:399px;top:28px;">Safety scuffing</span>
<span style="left:526px;top:28px;">5.723</span>
<span style="left:586px;top:28px;">56.14</span>
<span style="left:4px;top:48px;">Safety flank</span>
<span style="left:115px;top:48px;">dyn./stat.</span>
<span style="left:179px;top:48px;">4.06</span>
<span style="left:218px;top:48px;">/ 7.042</span>
<span style="left:279px;top:48px;">4.117</span>
<span style="left:318px;top:48px;">/ 7.14</span>
<span style="left:5px;top:75px;">Transverse contact ratio ε<sub style="font-size:10px;position:relative;top:6px;vertical-align:baseline;line-height:0">α</sub>:&nbsp; 1.471</span>
<span style="left:222px;top:75px;">Overlap contact ratio ε<sub style="font-size:10px;position:relative;top:6px;vertical-align:baseline;line-height:0">β</sub>:&nbsp; 0.0</span>
<span style="left:420px;top:75px;">Total contact ratio ε<sub style="font-size:10px;position:relative;top:6px;vertical-align:baseline;line-height:0">γ</sub>:&nbsp; 1.471</span>
</div>
<div id="pop">
<div class="mi h" style="top:2px">DXF output</div>
<div class="mi " style="top:23px">STEP / IGES</div>
<div class="mi " style="top:44px">GDE output</div>
<div class="mi d" style="top:69px">SOLIDWORKS export</div>
<div class="mi d" style="top:90px">Solid Edge export</div>
<div class="mi d" style="top:111px">Autodesk Inventor export</div>
<div class="mi d" style="top:132px">CATIA export</div>
<div class="mi d" style="top:153px">NX (Unigraphics) export</div>
<div class="mi d" style="top:174px">ProE export</div>
<div class="mi " style="top:199px">Manufacturing data</div>
<div class="mi " style="top:224px">Coordinate table</div>
<div class="ms" style="top:66px"></div>
<div class="ms" style="top:196px"></div>
<div class="ms" style="top:221px"></div>
<div class="tl"></div>
</div>
<div id="frame"></div>
</div>
</body></html>
